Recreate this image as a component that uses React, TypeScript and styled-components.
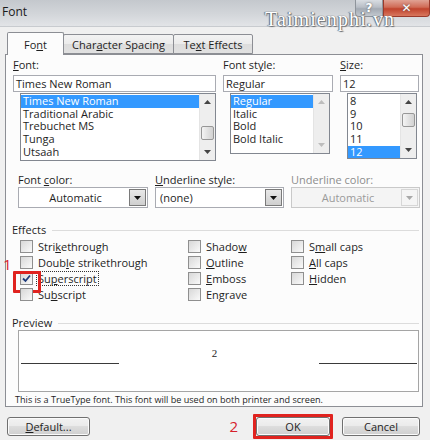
import styled, { createGlobalStyle } from "styled-components";

const GlobalStyle = createGlobalStyle`
  html, body { margin: 0; padding: 0; background: #f0f0f0; }
  body {
    font-family: "Open Sans", "Noto Sans", sans-serif;
    font-size: 11px;
    color: #1e1e1e;
  }
  * { box-sizing: border-box; }
`;

const Window = styled.div`
  width: 430px;
  height: 440px;
  overflow: hidden;
  position: relative;
  background: #f0f0f0;
`;

const TitleBar = styled.div`
  height: 27px;
  display: flex;
  align-items: flex-start;
  background: linear-gradient(to bottom, #c4c8cd 0%, #d3d6da 55%, #e2e4e7 100%);
  border-bottom: 1px solid #c8cbcf;
  position: relative;
`;

const Title = styled.div`
  padding: 3px 0 0 2px;
  font-size: 12px;
  color: #1a1a1a;
  flex: 1;
`;

const Watermark = styled.div`
  position: absolute;
  left: 265px;
  top: 8px;
  z-index: 2;
  font-family: "Liberation Serif", serif;
  font-size: 20px;
  letter-spacing: 1.1px;
  color: #ffffff;
  text-shadow: 0 0 1px #5a5e63, 1px 1px 1px #6c7076, -1px 0 1px #6c7076;
`;

const CaptionButton = styled.div<{ $close?: boolean }>`
  width: ${(p) => (p.$close ? 47 : 28)}px;
  height: 17px;
  display: flex;
  align-items: center;
  justify-content: center;
  font-family: "DejaVu Sans", sans-serif;
  font-weight: bold;
  font-size: 12px;
  color: #ffffff;
  border: 1px solid ${(p) => (p.$close ? "#9a3a2c" : "#8e949b")};
  border-top: none;
  border-radius: 0 0 ${(p) => (p.$close ? "4px 0" : "0 4px")};
  background: ${(p) =>
    p.$close
      ? "linear-gradient(to bottom, #e0a294 0%, #d06b56 45%, #c0432d 55%, #d8775e 100%)"
      : "linear-gradient(to bottom, #d9dde2 0%, #b8bec6 45%, #a3aab3 55%, #c2c8cf 100%)"};
  text-shadow: 0 0 2px #555;
`;

const Body = styled.div`
  padding: 5px 7px 0 5px;
`;

const TabStrip = styled.div`
  display: flex;
  align-items: flex-end;
  height: 22px;
  padding-left: 2px;
  position: relative;
  z-index: 1;
`;

const Tab = styled.div<{ $active?: boolean; $w: number }>`
  width: ${(p) => p.$w}px;
  height: ${(p) => (p.$active ? 23 : 20)}px;
  margin-bottom: ${(p) => (p.$active ? -1 : 0)}px;
  margin-left: ${(p) => (p.$active ? 0 : -1)}px;
  border: 1px solid #8c8e94;
  border-bottom: ${(p) => (p.$active ? "none" : "1px solid #8c8e94")};
  border-radius: 2px 2px 0 0;
  background: ${(p) =>
    p.$active ? "#fcfcfc" : "linear-gradient(to bottom, #f3f3f3 0%, #ebebeb 50%, #dcdcdc 51%, #e1e1e1 100%)"};
  display: flex;
  align-items: center;
  justify-content: center;
  padding-top: ${(p) => (p.$active ? 0 : 1)}px;
  font-size: 11px;
  color: #1e1e1e;
`;

const Key = styled.span`
  text-decoration: underline;
  text-underline-offset: 1px;
`;

const Panel = styled.div`
  height: 353px;
  border: 1px solid #8c8e94;
  background: #fcfcfc;
  display: flex;
  flex-direction: column;
`;

const FontRow = styled.div`
  display: grid;
  grid-template-columns: 203px 110px 79px;
  column-gap: 7px;
  padding: 3px 0 0 7px;
`;

const Field = styled.div`
  display: flex;
  flex-direction: column;
`;

const Label = styled.div<{ $disabled?: boolean }>`
  height: 14px;
  line-height: 14px;
  color: ${(p) => (p.$disabled ? "#8d8d8d" : "#1e1e1e")};
  white-space: nowrap;
`;

const TextInput = styled.div`
  margin-top: 3px;
  height: 17px;
  border: 1px solid #a9abb2;
  background: #ffffff;
  padding: 0 2px;
  line-height: 15px;
  white-space: nowrap;
`;

const List = styled.div<{ $h: number; $right: number }>`
  margin: 1px ${(p) => p.$right}px 0 7px;
  height: ${(p) => p.$h}px;
  border: 1px solid #828790;
  background: #ffffff;
  display: flex;
`;

const ListItems = styled.div`
  flex: 1;
  padding-top: 1px;
  overflow: hidden;
`;

const ListItem = styled.div<{ $selected?: boolean }>`
  height: 12.7px;
  line-height: 12.7px;
  padding-left: 2px;
  white-space: nowrap;
  background: ${(p) => (p.$selected ? "#3399ff" : "transparent")};
  color: ${(p) => (p.$selected ? "#ffffff" : "#1e1e1e")};
`;

const ScrollBar = styled.div`
  width: 16px;
  display: flex;
  flex-direction: column;
  background: #eeeeee;
  border-left: 1px solid #e4e4e4;
`;

const ScrollArrow = styled.div`
  height: 16px;
  display: flex;
  align-items: center;
  justify-content: center;
`;

const ScrollTrack = styled.div`
  flex: 1;
  padding: 0 1px;
`;

const Thumb = styled.div<{ $top: number }>`
  margin-top: ${(p) => p.$top}px;
  height: 14px;
  border: 1px solid #979797;
  border-radius: 2px;
  background: linear-gradient(to right, #f4f4f4, #e2e2e2 50%, #d2d2d2);
`;

const ColorRow = styled.div`
  display: grid;
  grid-template-columns: 130px 129px 129px;
  column-gap: 7px;
  padding: 12px 0 0 12px;
`;

const Select = styled.div<{ $disabled?: boolean }>`
  height: 21px;
  display: flex;
  border: 1px solid ${(p) => (p.$disabled ? "#c9c9c9" : "#a9abb2")};
  background: ${(p) => (p.$disabled ? "#f4f4f4" : "#ffffff")};
`;

const SelectValue = styled.div<{ $center?: boolean; $disabled?: boolean }>`
  flex: 1;
  line-height: 19px;
  padding-left: 4px;
  text-align: ${(p) => (p.$center ? "center" : "left")};
  color: ${(p) => (p.$disabled ? "#9a9a9a" : "#1e1e1e")};
`;

const SelectButton = styled.div<{ $disabled?: boolean }>`
  width: 17px;
  margin: 1px;
  border: 1px solid ${(p) => (p.$disabled ? "#d6d6d6" : "#7a7a7a")};
  background: ${(p) => (p.$disabled ? "#f4f4f4" : "linear-gradient(to bottom, #e8e8e8, #cfcfcf)")};
  display: flex;
  align-items: center;
  justify-content: center;
`;

const Group = styled.div<{ $top: number }>`
  padding: ${(p) => p.$top}px 3px 0 6px;
`;

const GroupHeader = styled.div`
  display: flex;
  align-items: center;
  gap: 6px;
  height: 14px;
  line-height: 14px;
  &::after {
    content: "";
    flex: 1;
    border-top: 1px solid #dcdcdc;
  }
`;

const EffectsGrid = styled.div`
  display: grid;
  grid-template-columns: 168px 103px 1fr;
  grid-auto-flow: column;
  grid-template-rows: repeat(4, 16px);
  padding: 1px 0 0 8px;
`;

const CheckRow = styled.div`
  display: flex;
  align-items: center;
  gap: 3px;
`;

const Box = styled.span<{ $marked?: boolean }>`
  position: relative;
  width: 13px;
  height: 13px;
  flex: none;
  border: 1px solid #8f8f8f;
  background: linear-gradient(135deg, #d8d8d8 0%, #ececec 60%, #fafafa 100%);
  display: flex;
  align-items: center;
  justify-content: center;
  &::before {
    content: "";
    display: ${(p) => (p.$marked ? "block" : "none")};
    position: absolute;
    left: -8px;
    top: -2px;
    width: 22px;
    height: 16px;
    border: 3px solid #e0231f;
    border-radius: 1px;
  }
`;

const CheckLabel = styled.span<{ $focus?: boolean }>`
  white-space: nowrap;
  padding: 0 1px;
  line-height: 13px;
  border: 1px ${(p) => (p.$focus ? "dotted #333" : "solid transparent")};
`;

const PreviewBox = styled.div`
  margin: 0 0 0 6px;
  height: 62px;
  border: 1px solid #a5a5a5;
  background: #ffffff;
  display: grid;
  grid-template-columns: 98px 1fr 98px;
  align-items: center;
  padding: 0 1px 0 2px;
`;

const BaseLine = styled.div`
  border-top: 1px solid #3a3a3a;
  margin-top: 4px;
`;

const PreviewText = styled.div`
  text-align: center;
  font-family: "Liberation Serif", serif;
  font-size: 11px;
  margin-top: -16px;
  padding-right: 9px;
`;

const Note = styled.div`
  padding: 1px 0 0 9px;
  font-size: 9.1px;
  line-height: 14px;
  white-space: nowrap;
`;

const ButtonRow = styled.div`
  display: flex;
  align-items: center;
  margin-top: 7px;
  padding-left: 2px;
`;

const Button = styled.div<{ $w: number }>`
  width: ${(p) => p.$w}px;
  height: 19px;
  border: 1px solid #707070;
  border-radius: 3px;
  background: linear-gradient(to bottom, #f2f2f2 0%, #ebebeb 45%, #dddddd 50%, #cfcfcf 100%);
  display: flex;
  align-items: center;
  justify-content: center;
  font-size: 11px;
  box-shadow: inset 0 0 0 1px #fbfbfb;
`;

const RedFrame = styled.div`
  border: 3px solid #e0231f;
  border-radius: 1px;
`;

const Marker = styled.span`
  color: #d6212c;
  font-size: 15px;
  line-height: 15px;
  font-family: "Open Sans", sans-serif;
`;

const StepOne = styled(Marker)`
  position: absolute;
  left: 3px;
  top: 257px;
`;

const Spacer = styled.div<{ $w?: number }>`
  flex: ${(p) => (p.$w === undefined ? "1" : `0 0 ${p.$w}px`)};
`;

function Arrow({ up, color = "#444" }: { up?: boolean; color?: string }) {
  return (
    <svg width="7" height="4" viewBox="0 0 7 4">
      <path d={up ? "M0 4 L3.5 0 L7 4 Z" : "M0 0 L3.5 4 L7 0 Z"} fill={color} />
    </svg>
  );
}

function ListBox({
  items,
  selected,
  h,
  right,
  thumb,
}: {
  items: string[];
  selected: string;
  h: number;
  right: number;
  thumb?: number;
}) {
  const arrowColor = thumb === undefined ? "#bdbdbd" : "#444";
  return (
    <List $h={h} $right={right}>
      <ListItems>
        {items.map((it) => (
          <ListItem key={it} $selected={it === selected}>
            {it}
          </ListItem>
        ))}
      </ListItems>
      <ScrollBar>
        <ScrollArrow>
          <Arrow up color={arrowColor} />
        </ScrollArrow>
        <ScrollTrack>{thumb !== undefined && <Thumb $top={thumb} />}</ScrollTrack>
        <ScrollArrow>
          <Arrow color={arrowColor} />
        </ScrollArrow>
      </ScrollBar>
    </List>
  );
}

function Check({ label, marked, focus }: { label: React.ReactNode; marked?: boolean; focus?: boolean }) {
  return (
    <CheckRow>
      <Box $marked={marked}>
        {marked && (
          <svg width="9" height="9" viewBox="0 0 9 9">
            <path d="M1 4.5 L3.5 7 L8 1.5" stroke="#1f3b7a" strokeWidth="1.8" fill="none" />
          </svg>
        )}
      </Box>
      <CheckLabel $focus={focus}>{label}</CheckLabel>
    </CheckRow>
  );
}

function Dropdown({ value, center, disabled }: { value: string; center?: boolean; disabled?: boolean }) {
  return (
    <Select $disabled={disabled}>
      <SelectValue $center={center} $disabled={disabled}>
        {value}
      </SelectValue>
      <SelectButton $disabled={disabled}>
        <Arrow color={disabled ? "#a8a8a8" : "#111"} />
      </SelectButton>
    </Select>
  );
}

export default function App() {
  return (
    <Window>
      <GlobalStyle />
      <TitleBar>
        <Title>Font</Title>
        <Watermark>Taimienphi.vn</Watermark>
        <CaptionButton>?</CaptionButton>
        <CaptionButton $close>✕</CaptionButton>
      </TitleBar>
      <Body>
        <TabStrip>
          <Tab $active $w={57}>
            Fo<Key>n</Key>t
          </Tab>
          <Tab $w={111}>
            Char<Key>a</Key>cter Spacing
          </Tab>
          <Tab $w={80}>
            Te<Key>x</Key>t Effects
          </Tab>
        </TabStrip>
        <Panel>
          <FontRow>
            <Field>
              <Label>
                <Key>F</Key>ont:
              </Label>
              <TextInput>Times New Roman</TextInput>
              <ListBox
                items={["Times New Roman", "Traditional Arabic", "Trebuchet MS", "Tunga", "Utsaah"]}
                selected="Times New Roman"
                h={68}
                right={0}
                thumb={16}
              />
            </Field>
            <Field>
              <Label>
                Font st<Key>y</Key>le:
              </Label>
              <TextInput>Regular</TextInput>
              <ListBox
                items={["Regular", "Italic", "Bold", "Bold Italic"]}
                selected="Regular"
                h={61}
                right={3}
              />
            </Field>
            <Field>
              <Label>
                <Key>S</Key>ize:
              </Label>
              <TextInput>12</TextInput>
              <ListBox items={["8", "9", "10", "11", "12"]} selected="12" h={66} right={2} thumb={3} />
            </Field>
          </FontRow>
          <ColorRow>
            <Field>
              <Label>
                Font <Key>c</Key>olor:
              </Label>
              <Dropdown value="Automatic" center />
            </Field>
            <Field>
              <Label>
                <Key>U</Key>nderline style:
              </Label>
              <Dropdown value="(none)" />
            </Field>
            <Field>
              <Label $disabled>Underline color:</Label>
              <Dropdown value="Automatic" center disabled />
            </Field>
          </ColorRow>
          <Group $top={15}>
            <GroupHeader>Effects</GroupHeader>
            <EffectsGrid>
              <Check label={<>Stri<Key>k</Key>ethrough</>} />
              <Check label={<>Doub<Key>l</Key>e strikethrough</>} />
              <Check label={<>Su<Key>p</Key>erscript</>} marked focus />
              <Check label={<>Su<Key>b</Key>script</>} />
              <Check label={<>Shado<Key>w</Key></>} />
              <Check label={<><Key>O</Key>utline</>} />
              <Check label={<><Key>E</Key>mboss</>} />
              <Check label={<>En<Key>g</Key>rave</>} />
              <Check label={<>S<Key>m</Key>all caps</>} />
              <Check label={<><Key>A</Key>ll caps</>} />
              <Check label={<><Key>H</Key>idden</>} />
            </EffectsGrid>
          </Group>
          <Group $top={14}>
            <GroupHeader>Preview</GroupHeader>
            <PreviewBox>
              <BaseLine />
              <PreviewText>2</PreviewText>
              <BaseLine />
            </PreviewBox>
          </Group>
          <Note>This is a TrueType font. This font will be used on both printer and screen.</Note>
        </Panel>
        <ButtonRow>
          <Button $w={83}>
            <Key>D</Key>efault...
          </Button>
          <Spacer />
          <Marker>2</Marker>
          <Spacer $w={15} />
          <RedFrame>
            <Button $w={74}>OK</Button>
          </RedFrame>
          <Spacer $w={9} />
          <Button $w={78}>Cancel</Button>
          <Spacer $w={3} />
        </ButtonRow>
      </Body>
      <StepOne>1</StepOne>
    </Window>
  );
}
